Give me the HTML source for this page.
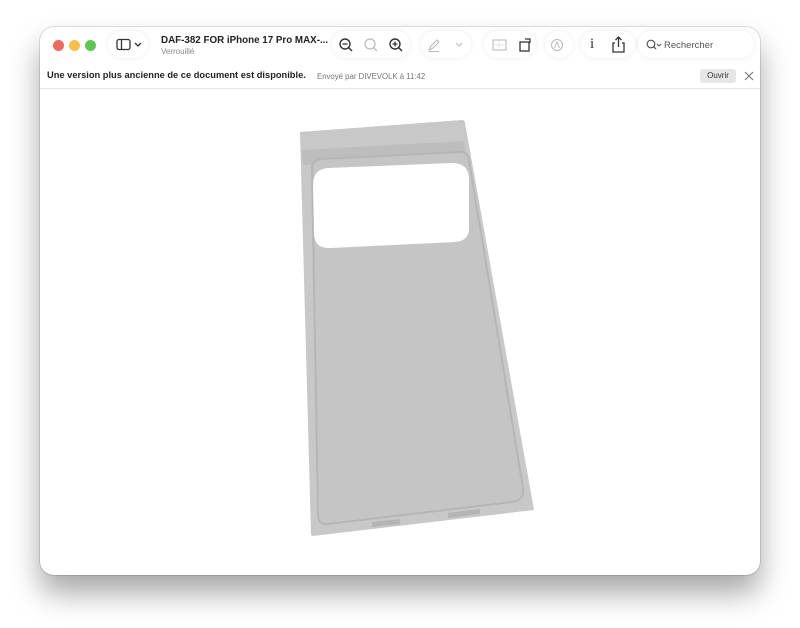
<!DOCTYPE html>
<html><head><meta charset="utf-8"><style>
html,body{margin:0;padding:0;width:800px;height:628px;background:#fff;overflow:hidden;font-family:"Liberation Sans",sans-serif;}
.win{position:absolute;left:40px;top:27px;width:720px;height:548px;background:#fff;border-radius:14px;box-shadow:0 18px 30px rgba(0,0,0,0.35),0 0 0 1px rgba(0,0,0,0.12);overflow:hidden;}
.dot{position:absolute;top:13px;width:11px;height:11px;border-radius:50%;}
.pill{position:absolute;top:4px;height:27px;background:#fff;border-radius:14px;box-shadow:0 0 6px rgba(0,0,0,0.08);}
.t{position:absolute;white-space:nowrap;}
svg.i{position:absolute;}
</style></head><body>
<div class="win">
 <div class="dot" style="left:13px;background:#ed6a5e"></div>
 <div class="dot" style="left:29px;background:#f5bf4f"></div>
 <div class="dot" style="left:45px;background:#61c554"></div>
 <div class="pill" style="left:68px;width:40px"></div>
 <svg class="i" style="left:76px;top:11px" width="30" height="14"><rect x="1" y="1.5" width="13" height="10" rx="2" fill="none" stroke="#333" stroke-width="1.3"/><line x1="5.5" y1="1.5" x2="5.5" y2="11.5" stroke="#333" stroke-width="1.3"/><path d="M19 5l3 3 3-3" fill="none" stroke="#333" stroke-width="1.3"/></svg>
 <div class="t" style="left:121px;top:8px;font-size:9.8px;font-weight:bold;color:#222">DAF-382 FOR iPhone 17 Pro MAX-...</div>
 <div class="t" style="left:121px;top:20px;font-size:8px;color:#888">Verrouillé</div>
 <div class="pill" style="left:292px;width:78px"></div>
 <svg class="i" style="left:298px;top:10px" width="70" height="16">
  <circle cx="7" cy="7" r="5" fill="none" stroke="#333" stroke-width="1.4"/><line x1="10.5" y1="10.5" x2="14" y2="14" stroke="#333" stroke-width="1.5"/><line x1="4.5" y1="7" x2="9.5" y2="7" stroke="#333" stroke-width="1.3"/>
  <circle cx="32" cy="7" r="5" fill="none" stroke="#bbb" stroke-width="1.2"/><line x1="35.5" y1="10.5" x2="39" y2="14" stroke="#bbb" stroke-width="1.3"/>
  <circle cx="57" cy="7" r="5" fill="none" stroke="#333" stroke-width="1.4"/><line x1="60.5" y1="10.5" x2="64" y2="14" stroke="#333" stroke-width="1.5"/><line x1="54.5" y1="7" x2="59.5" y2="7" stroke="#333" stroke-width="1.3"/><line x1="57" y1="4.5" x2="57" y2="9.5" stroke="#333" stroke-width="1.3"/>
 </svg>
 <div class="pill" style="left:381px;width:50px"></div>
 <svg class="i" style="left:387px;top:10px" width="40" height="16"><path d="M2 13l2-4 6-6 2 2-6 6z" fill="none" stroke="#bbb" stroke-width="1.1"/><line x1="2" y1="14.5" x2="12" y2="14.5" stroke="#bbb"/><path d="M29 6l3 3 3-3" fill="none" stroke="#bbb" stroke-width="1.1"/></svg>
 <div class="pill" style="left:444px;width:52px"></div>
 <svg class="i" style="left:451px;top:9px" width="45" height="18"><rect x="2" y="4" width="13" height="10" fill="none" stroke="#bbb" stroke-width="1.1"/><path d="M2 9h13M8 4v10" stroke="#ddd" stroke-width="0.8"/><rect x="29" y="6" width="9" height="9" fill="none" stroke="#333" stroke-width="1.3"/><path d="M34 3h5v4" fill="none" stroke="#333" stroke-width="1.2"/></svg>
 <div class="pill" style="left:505px;width:28px"></div>
 <svg class="i" style="left:510px;top:11px" width="16" height="16"><circle cx="7" cy="7" r="5.5" fill="none" stroke="#bbb" stroke-width="1.1"/><path d="M4.5 10l2.5-6 2.5 6" fill="none" stroke="#bbb"/></svg>
 <div class="pill" style="left:541px;width:54px"></div>
 <div class="t" style="left:550px;top:9px;font-size:15px;color:#333;font-family:'Liberation Serif',serif">i</div>
 <svg class="i" style="left:571px;top:9px" width="16" height="18"><path d="M4 7H2v9h11V7h-2" fill="none" stroke="#333" stroke-width="1.3"/><line x1="7.5" y1="1" x2="7.5" y2="11" stroke="#333" stroke-width="1.3"/><path d="M4.5 4l3-3 3 3" fill="none" stroke="#333" stroke-width="1.3"/></svg>
 <div class="pill" style="left:598px;width:116px"></div>
 <svg class="i" style="left:606px;top:12px" width="18" height="12"><circle cx="5" cy="5" r="3.8" fill="none" stroke="#555" stroke-width="1.2"/><line x1="7.8" y1="7.8" x2="10" y2="10" stroke="#555" stroke-width="1.3"/><path d="M11 5l2 2 2-2" fill="none" stroke="#555"/></svg>
 <div class="t" style="left:624px;top:13px;font-size:9.5px;color:#555">Rechercher</div>
 <div class="t" style="left:7px;top:43px;font-size:9.3px;font-weight:bold;color:#222">Une version plus ancienne de ce document est disponible.</div>
 <div class="t" style="left:277px;top:45px;font-size:7.8px;color:#777">Envoyé par DIVEVOLK à 11:42</div>
 <div class="t" style="left:660px;top:42px;width:36px;height:14px;background:#e6e6e6;border-radius:3px;font-size:8px;color:#333;text-align:center;line-height:14px">Ouvrir</div>
 <svg class="i" style="left:704px;top:44px" width="10" height="10"><path d="M1 1l8 8M9 1L1 9" stroke="#777" stroke-width="1.1"/></svg>
 <div style="position:absolute;left:0;top:61px;width:720px;height:1px;background:#e4e4e4"></div>
</div>
<svg style="position:absolute;left:0;top:0" width="800" height="628">
 <path d="M300 132 L462 120 Q465 120 465 123 L534 510 L313 536 Q311 536 311 534 Z" fill="#c8c8c8"/>
 <path d="M302 150 L464 141 L466 156 L303 165 Z" fill="#bdbdbd"/>
 <path d="M312 168 Q312 160 322 159 L460 152 Q468 152 469 160 L523 488 Q525 500 512 502 L328 524 Q318 525 318 515 Z" fill="#c5c5c5" stroke="#b6b6b6" stroke-width="2"/>
 <path d="M328 168 L452 163 Q468 163 469 178 L469 228 Q469 241 455 242 L331 248 Q314 249 314 233 L313 185 Q313 169 328 168 Z" fill="#fff"/>
 <path d="M372 522 L400 519 L400 524 L372 527 Z" fill="#b4b4b4"/>
 <path d="M448 513 L480 509 L480 514 L448 518 Z" fill="#b4b4b4"/>
</svg>
</body></html>
